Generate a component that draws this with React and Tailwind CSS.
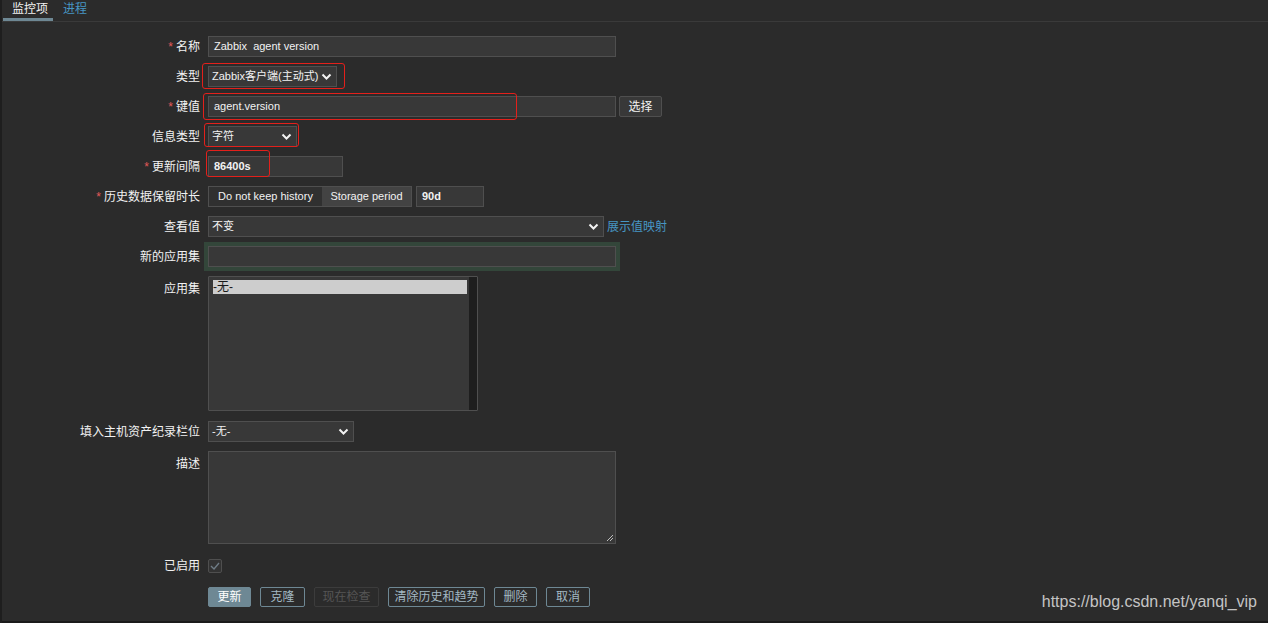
import React from 'react';

const FONT = { fontFamily: '"Liberation Sans", "Noto Sans CJK SC", Arial, sans-serif' };

function Chevron() {
  return (
    <svg width="11" height="7" viewBox="0 0 11 7" className="shrink-0">
      <polyline points="1.5,1.5 5.5,5.5 9.5,1.5" fill="none" stroke="#f2f2f2" strokeWidth="2" />
    </svg>
  );
}

function Label({ text, required, top }) {
  return (
    <div className={`w-[198px] shrink-0 text-right text-[12px] text-[#f2f2f2] ${top ? 'self-start pt-[4px]' : ''}`}>
      {required && <span className="text-[#e45959] mr-[3px]">*</span>}
      {text}
    </div>
  );
}

function Row({ children, className = '' }) {
  return <div className={`flex items-center min-h-[21px] ${className}`}>{children}</div>;
}

function Input({ value, w, className = '' }) {
  return (
    <div className={`h-[21px] ${w} bg-[#383838] border border-[#4f4f4f] px-[5px] flex items-center text-[11px] text-[#f2f2f2] whitespace-pre ${className}`}>
      {value}
    </div>
  );
}

function Select({ value, w }) {
  return (
    <div className={`h-[21px] ${w} bg-[#383838] border border-[#4f4f4f] pl-[3px] pr-[4px] flex items-center justify-between text-[11px] text-[#f2f2f2] whitespace-nowrap`}>
      <span>{value}</span>
      <Chevron />
    </div>
  );
}

function RedBox({ className }) {
  return <div className={`absolute border border-[#e3201b] rounded-[3px] pointer-events-none ${className}`} />;
}

export default function App() {
  return (
    <div style={FONT} className="relative w-[1268px] h-[623px] bg-[#2b2b2b] overflow-hidden flex">
      <div className="w-[2px] bg-[#1e1e1e] shrink-0" />
      <div className="flex-1 flex flex-col">
        {/* tabs */}
        <div className="flex items-end h-[22px] border-b border-[#3a3a3a] pl-px">
          <div className="w-[50px] h-[22px] pl-[9px] pt-px text-[12px] text-[#f2f2f2] border-b-[3px] border-[#6e8894]">监控项</div>
          <div className="h-[22px] pl-[10px] pt-px text-[12px] text-[#4796c4]">进程</div>
        </div>

        {/* form */}
        <div className="flex flex-col gap-[9px] pt-[14px]">
          <Row>
            <Label text="名称" required />
            <Input value="Zabbix  agent version" w="w-[408px]" className="ml-2" />
          </Row>
          <Row>
            <Label text="类型" />
            <div className="relative ml-2">
              <Select value="Zabbix客户端(主动式)" w="w-[129px]" />
              <RedBox className="-left-[6px] -top-[3px] w-[143px] h-[26px]" />
            </div>
          </Row>
          <Row>
            <Label text="键值" required />
            <div className="relative ml-2">
              <Input value="agent.version" w="w-[408px]" />
              <RedBox className="-left-[5px] -top-[3px] w-[314px] h-[27px]" />
            </div>
            <div className="ml-[3px] h-[21px] w-[43px] border border-[#4f4f4f] bg-[#383838] rounded-[2px] flex items-center justify-center text-[12px] text-[#f2f2f2]">选择</div>
          </Row>
          <Row>
            <Label text="信息类型" />
            <div className="relative ml-2">
              <Select value="字符" w="w-[89px]" />
              <RedBox className="-left-[4px] -top-[3px] w-[95px] h-[24px]" />
            </div>
          </Row>
          <Row>
            <Label text="更新间隔" required />
            <div className="relative ml-2">
              <Input value="86400s" w="w-[135px]" className="font-bold" />
              <RedBox className="-left-[2px] -top-[6px] w-[64px] h-[27px]" />
            </div>
          </Row>
          <Row>
            <Label text="历史数据保留时长" required />
            <div className="ml-2 flex h-[21px] border border-[#4f4f4f] text-[11px] text-[#f2f2f2]">
              <div className="w-[113px] bg-[#303030] flex items-center justify-center">Do not keep history</div>
              <div className="w-[89px] bg-[#434343] flex items-center justify-center">Storage period</div>
            </div>
            <Input value="90d" w="w-[68px]" className="ml-[4px] font-bold" />
          </Row>
          <Row>
            <Label text="查看值" />
            <div className="ml-2">
              <Select value="不变" w="w-[396px]" />
            </div>
            <span className="ml-[3px] text-[12px] text-[#4796c4]">展示值映射</span>
          </Row>
          <Row>
            <Label text="新的应用集" />
            <Input value="" w="w-[408px]" className="ml-2 shadow-[0_0_0_4px_#33463a]" />
          </Row>
          <Row>
            <Label text="应用集" top />
            <div className="ml-2 w-[270px] h-[135px] bg-[#383838] border border-[#4f4f4f] rounded-[1px] flex">
              <div className="flex-1 pt-[3px] pl-[4px] pr-[2px]">
                <div className="h-[14px] bg-[#cdcdcd] text-[12px] text-[#1a1a1a] leading-[14px]">-无-</div>
              </div>
              <div className="w-[8px] bg-[#1e1e1e]" />
            </div>
          </Row>
          <Row className="mt-px">
            <Label text="填入主机资产纪录栏位" />
            <div className="ml-2">
              <Select value="-无-" w="w-[146px]" />
            </div>
          </Row>
          <Row>
            <Label text="描述" top />
            <div className="relative ml-2 w-[408px] h-[93px] bg-[#383838] border border-[#4f4f4f]">
              <svg width="8" height="8" viewBox="0 0 8 8" className="absolute right-[1px] bottom-[1px]">
                <line x1="7" y1="1" x2="1" y2="7" stroke="#bdbdbd" strokeWidth="1" />
                <line x1="7" y1="4" x2="4" y2="7" stroke="#bdbdbd" strokeWidth="1" />
              </svg>
            </div>
          </Row>
          <Row className="mt-[2px]">
            <Label text="已启用" />
            <div className="ml-2 w-[14px] h-[14px] border border-[#4f4f4f] bg-[#333] rounded-[2px] flex items-center justify-center">
              <svg width="10" height="8" viewBox="0 0 10 8">
                <polyline points="1,4 4,7 9,1" fill="none" stroke="#6f7c86" strokeWidth="1.4" />
              </svg>
            </div>
          </Row>
          <div className="flex items-center gap-[9px] pl-[206px] mt-[2px] text-[12px]">
            <div className="h-[20px] w-[43px] rounded-[2px] bg-[#6e8894] border border-[#6e8894] text-white flex items-center justify-center">更新</div>
            <div className="h-[20px] w-[45px] rounded-[2px] border border-[#6e8894] text-[#a3b9c4] flex items-center justify-center">克隆</div>
            <div className="h-[20px] w-[65px] rounded-[2px] border border-[#3c3c3c] text-[#555] flex items-center justify-center">现在检查</div>
            <div className="h-[20px] w-[97px] rounded-[2px] border border-[#6e8894] text-[#a3b9c4] flex items-center justify-center">清除历史和趋势</div>
            <div className="h-[20px] w-[43px] rounded-[2px] border border-[#6e8894] text-[#a3b9c4] flex items-center justify-center">删除</div>
            <div className="h-[20px] w-[44px] rounded-[2px] border border-[#6e8894] text-[#a3b9c4] flex items-center justify-center">取消</div>
          </div>
        </div>
        <div className="flex-1" />
        <div className="h-[2px] bg-[#1a1a1a]" />
      </div>
      <div className="absolute right-[11px] bottom-[9px] text-[16px] text-[#c4c4c4]">https://blog.csdn.net/yanqi_vip</div>
    </div>
  );
}
